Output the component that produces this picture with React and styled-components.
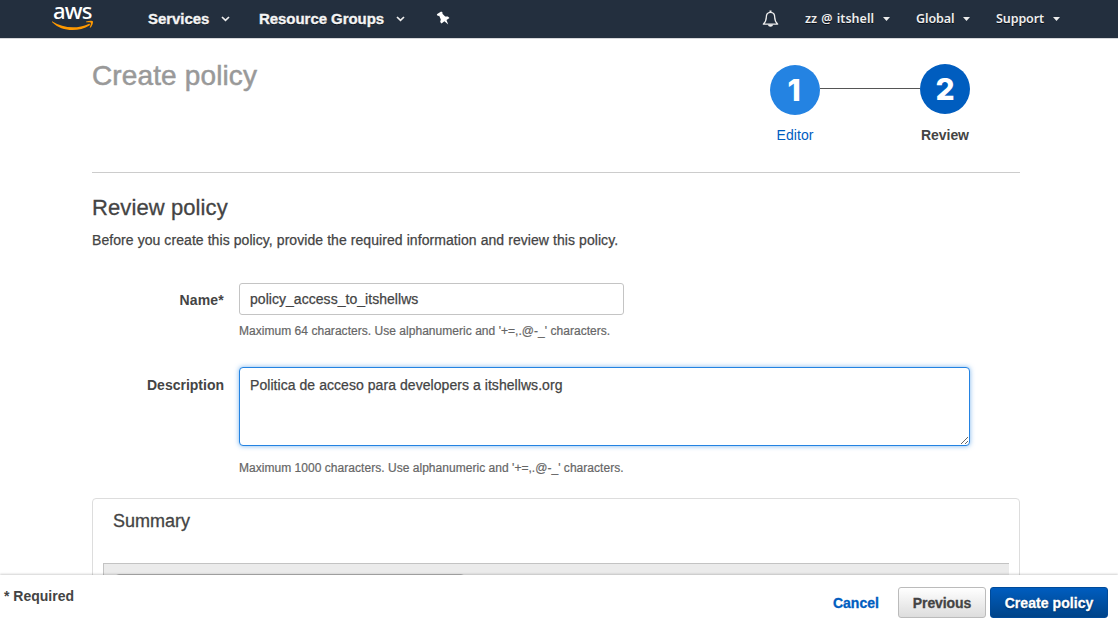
import React from "react";
import styled, { createGlobalStyle } from "styled-components";

const GlobalStyle = createGlobalStyle`
  * { box-sizing: border-box; }
  html, body { margin: 0; padding: 0; background: #fff; overflow: hidden; }
  body { font-family: "Liberation Sans", Helvetica, Arial, sans-serif; font-size: 14px; color: #444; }
  h1, h2, h3, p { margin: 0; font-weight: 400; }
`;

const Page = styled.div`
  height: 625px;
  display: flex;
  flex-direction: column;
  overflow: hidden;
`;

const NavBar = styled.header`
  flex: none;
  height: 39px;
  padding: 0 50px 0 52px;
  display: flex;
  align-items: flex-start;
  background: #232f3e;
  border-bottom: 1px solid #d6d7da;
  color: #fff;
`;

const Logo = styled.a`
  width: 96px;
  height: 38px;
  display: flex;
  flex-direction: column;
  align-items: flex-start;
`;

const LogoWord = styled.span`
  height: 20px;
  padding-left: 1px;
  font: 500 22px/20px "Noto Sans", "Open Sans", sans-serif;
  letter-spacing: -0.8px;
`;

const NavItem = styled.a`
  width: ${(p) => p.$width}px;
  height: 38px;
  display: flex;
  align-items: center;
  justify-content: space-between;
  white-space: nowrap;
  margin-right: ${(p) => p.$after || 0}px;
  font: ${(p) => (p.$small ? '600 12.5px/38px "Noto Sans", Verdana, sans-serif' : '700 15px/38px "Liberation Sans", Arial, sans-serif')};
  letter-spacing: ${(p) => p.$track || 0}px;
  word-spacing: ${(p) => (p.$small ? 1 : 0)}px;
  color: ${(p) => (p.$small ? "#eee" : "#f4f4f4")};
  text-shadow: 0 1px 0 #0b1017;
  -webkit-text-stroke: ${(p) => (p.$small ? 0 : 0.35)}px #f4f4f4;
  svg { flex: none; }
`;

const NavIcon = styled.span`
  height: 38px;
  width: ${(p) => p.$width}px;
  margin-right: ${(p) => p.$after || 0}px;
  padding-top: ${(p) => p.$top}px;
  svg { display: block; }
`;

const Spacer = styled.div`
  flex: 1;
`;

const Content = styled.main`
  flex: 1;
  min-height: 0;
  overflow: hidden;
  width: 928px;
  margin-left: 92px;
`;

const TitleRow = styled.div`
  height: 134px;
  display: flex;
  justify-content: space-between;
  align-items: flex-start;
  padding-right: 50px;
  border-bottom: 1px solid #ccc;
`;

const PageTitle = styled.h1`
  margin-top: 17px;
  font-size: 28px;
  line-height: 40px;
  color: #999;
  letter-spacing: 0.13px;
  -webkit-text-stroke: 0.5px #999;
`;

const Stepper = styled.div`
  display: flex;
  padding-top: 25px;
`;

const Connector = styled.div`
  width: 100px;
  height: 1px;
  margin-top: 24px;
  background: #555;
`;

const Step = styled.div`
  width: 50px;
  display: flex;
  flex-direction: column;
  align-items: center;
`;

const StepCircle = styled.div`
  width: 50px;
  height: 50px;
  flex: none;
  margin-top: ${(p) => (p.$current ? 0 : 1)}px;
  margin-bottom: ${(p) => (p.$current ? 11 : 10)}px;
  padding-right: ${(p) => (p.$current ? 0 : 2)}px;
  border-radius: 50%;
  background: ${(p) => (p.$current ? "#005dbf" : "#2483e2")};
  color: #fff;
  font: 800 30px/51px Inter, "Liberation Sans", sans-serif;
  text-align: center;
`;

const StepLabel = styled.span`
  line-height: 20px;
  white-space: nowrap;
  font-weight: ${(p) => (p.$current ? 700 : 400)};
  color: ${(p) => (p.$current ? "#444" : "#005dbf")};
  letter-spacing: ${(p) => (p.$current ? -0.05 : 0.08)}px;
`;

const SectionTitle = styled.h2`
  margin-top: 19px;
  font-size: 22px;
  line-height: 32px;
  letter-spacing: 0.1px;
  -webkit-text-stroke: 0.3px #444;
`;

const Intro = styled.p`
  margin-top: 6px;
  line-height: 20px;
  letter-spacing: 0.07px;
  -webkit-text-stroke: 0.25px #444;
`;

const Field = styled.div`
  display: grid;
  grid-template-columns: 132px 1fr;
  column-gap: 15px;
  margin-top: ${(p) => p.$top}px;
`;

const Label = styled.label`
  text-align: right;
  font-weight: 700;
  line-height: ${(p) => p.$line || 34}px;
  height: 32px;
  letter-spacing: ${(p) => p.$track || 0}px;
`;

const TextInput = styled.input`
  display: block;
  width: 385px;
  height: 32px;
  padding: 0 10px;
  border: 1px solid #c4c4c4;
  border-radius: 3px;
  outline: none;
  background: #fff;
  color: #444;
  font: 14px "Liberation Sans", Arial, sans-serif;
  letter-spacing: 0.04px;
  -webkit-text-stroke: 0.25px #444;
`;

const TextArea = styled.textarea`
  display: block;
  width: 731px;
  height: 79px;
  padding: 7px 10px;
  border: 1px solid #2483e2;
  border-radius: 4px;
  outline: none;
  box-shadow: 0 0 5px rgba(36, 131, 226, 0.6);
  background: #fff;
  color: #444;
  font: 14px/20px "Liberation Sans", Arial, sans-serif;
  letter-spacing: 0.055px;
  -webkit-text-stroke: 0.25px #444;
`;

const Hint = styled.div`
  margin-top: ${(p) => p.$top}px;
  font-size: 12px;
  line-height: 18px;
  color: #666;
  letter-spacing: 0.035px;
  -webkit-text-stroke: 0.2px #666;
`;

const SummaryPanel = styled.section`
  margin-top: 21px;
  height: 200px;
  padding: 0 10px;
  border: 1px solid #ddd;
  border-radius: 4px;
`;

const SummaryTitle = styled.h3`
  padding: 7px 10px 0;
  height: 64px;
  font-size: 18px;
  line-height: 30px;
  -webkit-text-stroke: 0.3px #444;
`;

const SummaryToolbar = styled.div`
  height: 60px;
  padding: 10px 0 0 11px;
  border: 1px solid #c3c3c3;
  border-right: 0;
  background: #ebebeb;
`;

const FilterBox = styled.div`
  width: 350px;
  height: 32px;
  border: 1px solid #b4b4b4;
  border-radius: 4px;
  background: #fff;
`;

const Footer = styled.footer`
  flex: none;
  height: 50px;
  padding: 0 10px 0 4px;
  display: flex;
  align-items: flex-start;
  background: #fff;
  position: relative;
  box-shadow: 0 -1px 2px rgba(0, 0, 0, 0.18);
`;

const Required = styled.strong`
  flex: 1;
  line-height: 20px;
  padding-top: 11px;
`;

const CancelLink = styled.a`
  width: 46px;
  margin: 12px 19px 0 0;
  height: 32px;
  line-height: 32px;
  font-weight: 700;
  color: #005dbf;
  white-space: nowrap;
  letter-spacing: -0.02px;
  -webkit-text-stroke: 0.3px #005dbf;
`;

const Button = styled.button`
  margin-top: 12px;
  margin-left: ${(p) => (p.$primary ? 4 : 0)}px;
  width: ${(p) => (p.$primary ? 118 : 88)}px;
  height: 31px;
  padding: 1px 0 0;
  border: 1px solid ${(p) => (p.$primary ? "#004a99" : "#bbb")};
  border-radius: 3px;
  background: ${(p) => (p.$primary ? "linear-gradient(#005dbf, #004489)" : "linear-gradient(#fff, #ddd)")};
  color: ${(p) => (p.$primary ? "#fff" : "#444")};
  text-shadow: ${(p) => (p.$primary ? "0 1px 2px #002a55" : "none")};
  font: 700 14px/20px "Liberation Sans", Arial, sans-serif;
  white-space: nowrap;
  letter-spacing: ${(p) => (p.$primary ? 0.06 : -0.1)}px;
  -webkit-text-stroke: 0.3px currentColor;
`;

const Chevron = () => (
  <svg width="9" height="6" viewBox="0 0 9 6">
    <path d="M1 1l3.500 3.400L8 1" fill="none" stroke="#eee" strokeWidth="1.7" />
  </svg>
);

const Caret = () => (
  <svg width="7" height="4" viewBox="0 0 7 4">
    <path d="M0 0h7L3.500 4z" fill="#eee" />
  </svg>
);

const Smile = () => (
  <svg width="42" height="11" viewBox="0 0 42 11">
    <path d="M.4 1.400C10.500 8 25 9.300 36.600 3.900c1.300-.6 1.900.7.8 1.500C26.500 12.200 9.500 11.800.2 2.200c-.5-.6-.2-1.100.2-.8z" fill="#f90" />
    <path d="M34.200 1.600c2.300-1.100 6-1.200 6.600-.4.6.9-.3 4.700-2.300 6.400-.5.400-.9.100-.7-.4.700-1.700 1.400-3.900 1-4.500-.5-.6-2.700-.5-4.400-.4-.5 0-.6-.4-.2-.7z" fill="#f90" />
  </svg>
);

const Pin = () => (
  <svg width="14" height="15" viewBox="0 0 14 15">
    <path d="M.8 3.200 5.200.4l1.500 1.300-.3 1 2.800 2.800 2.700-.1 1.600 1.700-3 2 1.700 4.500L8.400 10.200 5.500 12.600 4.200 11.100l.6-2.500L3.200 4.800 1.800 5z" fill="#fff" />
  </svg>
);

const Bell = () => (
  <svg width="17" height="18" viewBox="0 0 17 18">
    <path d="M8.500 2.300c-3 0-4.200 2.200-4.200 4.900 0 3.400-.9 4.900-3 6.900h14.400c-2.100-2-3-3.500-3-6.900 0-2.700-1.200-4.900-4.200-4.900z" fill="none" stroke="#eee" strokeWidth="1.300" strokeLinejoin="round" />
    <path d="M7.500.6h2v2h-2zM6 14.500h5c0 3-5 3-5 0z" fill="#eee" />
  </svg>
);

export default function App() {
  return (
    <Page>
      <GlobalStyle />
      <NavBar>
        <Logo>
          <LogoWord>aws</LogoWord>
          <Smile />
        </Logo>
        <NavItem $width={82} $after={29} $track={-0.05}>Services<Chevron /></NavItem>
        <NavItem $width={146} $after={31} $track={-0.05}>Resource Groups<Chevron /></NavItem>
        <NavIcon $width={14} $top={11}><Pin /></NavIcon>
        <Spacer />
        <NavIcon $width={17} $after={26} $top={10}><Bell /></NavIcon>
        <NavItem $small $width={85} $after={26}>zz @ itshell<Caret /></NavItem>
        <NavItem $small $width={54} $after={26} $track={-0.1}>Global<Caret /></NavItem>
        <NavItem $small $width={64} $after={8} $track={-0.1}>Support<Caret /></NavItem>
      </NavBar>
      <Content>
        <TitleRow>
          <PageTitle>Create policy</PageTitle>
          <Stepper>
            <Step>
              <StepCircle>1</StepCircle>
              <StepLabel>Editor</StepLabel>
            </Step>
            <Connector />
            <Step>
              <StepCircle $current>2</StepCircle>
              <StepLabel $current>Review</StepLabel>
            </Step>
          </Stepper>
        </TitleRow>
        <SectionTitle>Review policy</SectionTitle>
        <Intro>Before you create this policy, provide the required information and review this policy.</Intro>
        <Field $top={33}>
          <Label $track={0.2}>Name*</Label>
          <div>
            <TextInput defaultValue="policy_access_to_itshellws" />
            <Hint $top={7}>Maximum 64 characters. Use alphanumeric and '+=,.@-_' characters.</Hint>
          </div>
        </Field>
        <Field $top={27}>
          <Label $line={36}>Description</Label>
          <div>
            <TextArea defaultValue="Politica de acceso para developers a itshellws.org" spellCheck={false} />
            <Hint $top={13}>Maximum 1000 characters. Use alphanumeric and '+=,.@-_' characters.</Hint>
          </div>
        </Field>
        <SummaryPanel>
          <SummaryTitle>Summary</SummaryTitle>
          <SummaryToolbar><FilterBox /></SummaryToolbar>
        </SummaryPanel>
      </Content>
      <Footer>
        <Required>* Required</Required>
        <CancelLink>Cancel</CancelLink>
        <Button>Previous</Button>
        <Button $primary>Create policy</Button>
      </Footer>
    </Page>
  );
}
